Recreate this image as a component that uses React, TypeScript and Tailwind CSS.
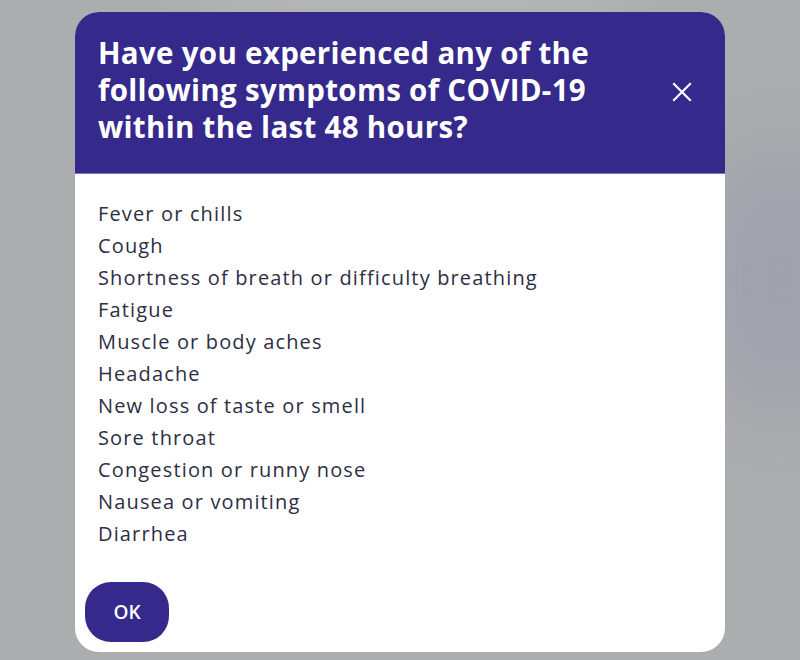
const symptoms = [
  "Fever or chills",
  "Cough",
  "Shortness of breath or difficulty breathing",
  "Fatigue",
  "Muscle or body aches",
  "Headache",
  "New loss of taste or smell",
  "Sore throat",
  "Congestion or runny nose",
  "Nausea or vomiting",
  "Diarrhea",
];

function CloseIcon() {
  return (
    <svg width="20" height="20" viewBox="0 0 20 20" fill="none" stroke="currentColor" strokeWidth="2.2" strokeLinecap="square">
      <path d="M2 2 L18 18 M18 2 L2 18" />
    </svg>
  );
}

export default function App() {
  return (
    <div
      className="relative w-[800px] h-[660px] overflow-hidden bg-[#acadaf] pt-[12px] pl-[75px]"
      style={{ fontFamily: '"Open Sans", sans-serif' }}
    >
      {/* blurred backdrop */}
      <div className="absolute -right-[60px] top-[150px] w-[160px] h-[260px] rounded-full bg-[#9c9cab] blur-2xl opacity-70" />
      <div className="absolute left-[200px] -top-[40px] w-[420px] h-[80px] rounded-full bg-[#bdbdbd] blur-2xl opacity-60" />

      <div className="relative w-[650px] h-[640px] rounded-[24px] overflow-hidden bg-white flex flex-col">
        <div className="h-[162px] bg-[#35298c] border-b border-[#7b72c8] pl-[23px] pr-[33px] pt-[22px] flex items-start justify-between">
          <h2 className="text-white font-bold text-[29.5px] leading-[37px] tracking-[0.3px] w-[540px]">
            Have you experienced any of the
            <br />
            following symptoms of COVID-19
            <br />
            within the last 48 hours?
          </h2>
          <button className="mt-[48px] text-white">
            <CloseIcon />
          </button>
        </div>

        <ul className="pl-[23px] pt-[24px] text-[#2e2e44] text-[20px] leading-[32px] tracking-[1.15px]">
          {symptoms.map((s) => (
            <li key={s}>{s}</li>
          ))}
        </ul>

        <div className="mt-auto pl-[10px] pb-[10px]">
          <button className="w-[84px] h-[60px] rounded-[26px] bg-[#35298c] text-white font-semibold text-[19px]">
            OK
          </button>
        </div>
      </div>
    </div>
  );
}
